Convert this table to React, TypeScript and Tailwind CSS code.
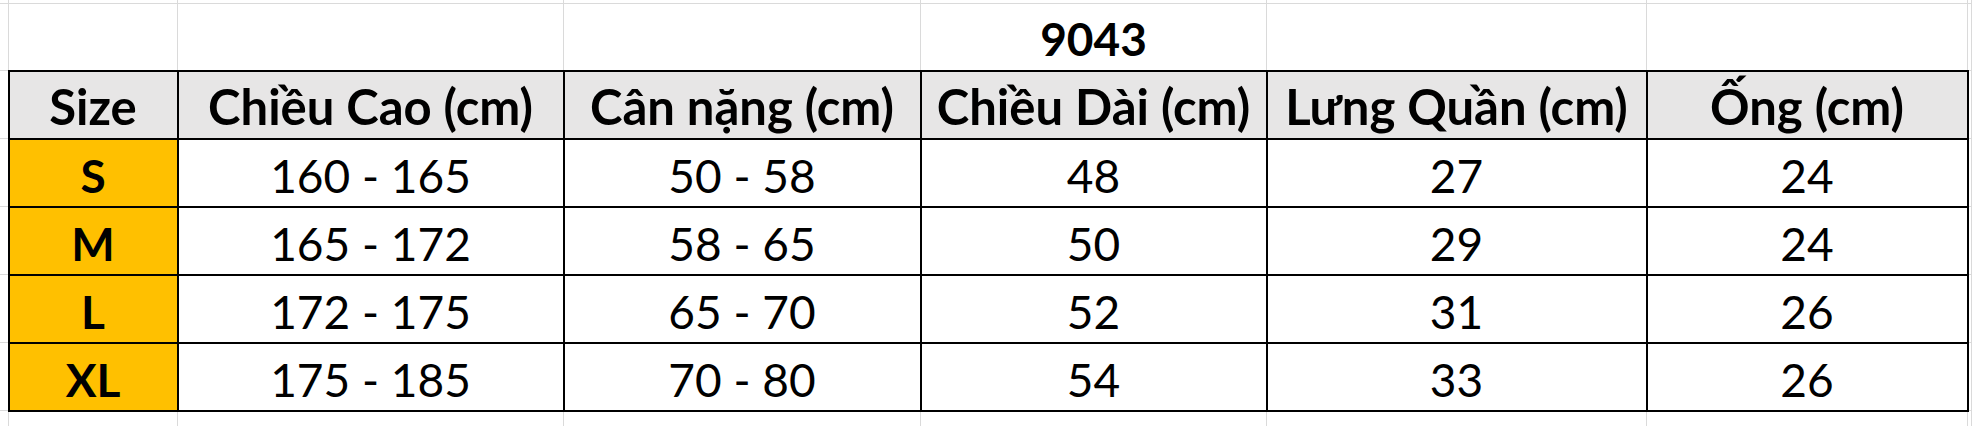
const widths = [9, 169, 386, 357, 346, 380, 321, 4];

const headers = ["Size", "Chiều Cao (cm)", "Cân nặng (cm)", "Chiều Dài (cm)", "Lưng Quần (cm)", "Ống (cm)"];

const rows = [
  ["S", "160 - 165", "50 - 58", "48", "27", "24"],
  ["M", "165 - 172", "58 - 65", "50", "29", "24"],
  ["L", "172 - 175", "65 - 70", "52", "31", "26"],
  ["XL", "175 - 185", "70 - 80", "54", "33", "26"],
];

const grid = "border border-[#dadada] p-0";
const cell = "border-2 border-black p-0 text-center align-middle";

export default function App() {
  return (
    <div className="w-[1972px] h-[426px] overflow-hidden bg-white text-black font-['Lato','Open_Sans',sans-serif]">
      <table className="table-fixed border-collapse -mt-px -ml-px">
        <colgroup>
          {widths.map((w, i) => (
            <col key={i} style={{ width: w }} />
          ))}
        </colgroup>
        <tbody>
          <tr className="h-[4px]">
            {widths.map((_, i) => (
              <td key={i} className={grid} />
            ))}
          </tr>
          <tr className="h-[67px]">
            <td className={grid} />
            <td className={grid} />
            <td className={grid} />
            <td className={grid} />
            <td className={`${grid} text-center align-bottom pb-[8px] text-[46px] font-bold leading-none`}>9043</td>
            <td className={grid} />
            <td className={grid} />
            <td className={grid} />
          </tr>
          <tr className="h-[68px]">
            <td className={grid} />
            {headers.map((h) => (
              <td key={h} className={`${cell} bg-[#e7e6e6] text-[49px] font-bold leading-none pt-[4px]`}>
                {h}
              </td>
            ))}
            <td className={grid} />
          </tr>
          {rows.map((r) => (
            <tr key={r[0]} className="h-[68px]">
              <td className={grid} />
              {r.map((v, i) => (
                <td
                  key={i}
                  className={`${cell} text-[46px] leading-none pt-[6px] ${
                    i === 0 ? "bg-[#ffc000] font-bold" : "bg-white"
                  }`}
                >
                  {v}
                </td>
              ))}
              <td className={grid} />
            </tr>
          ))}
          <tr className="h-[30px]">
            {widths.map((_, i) => (
              <td key={i} className={grid} />
            ))}
          </tr>
        </tbody>
      </table>
    </div>
  );
}
